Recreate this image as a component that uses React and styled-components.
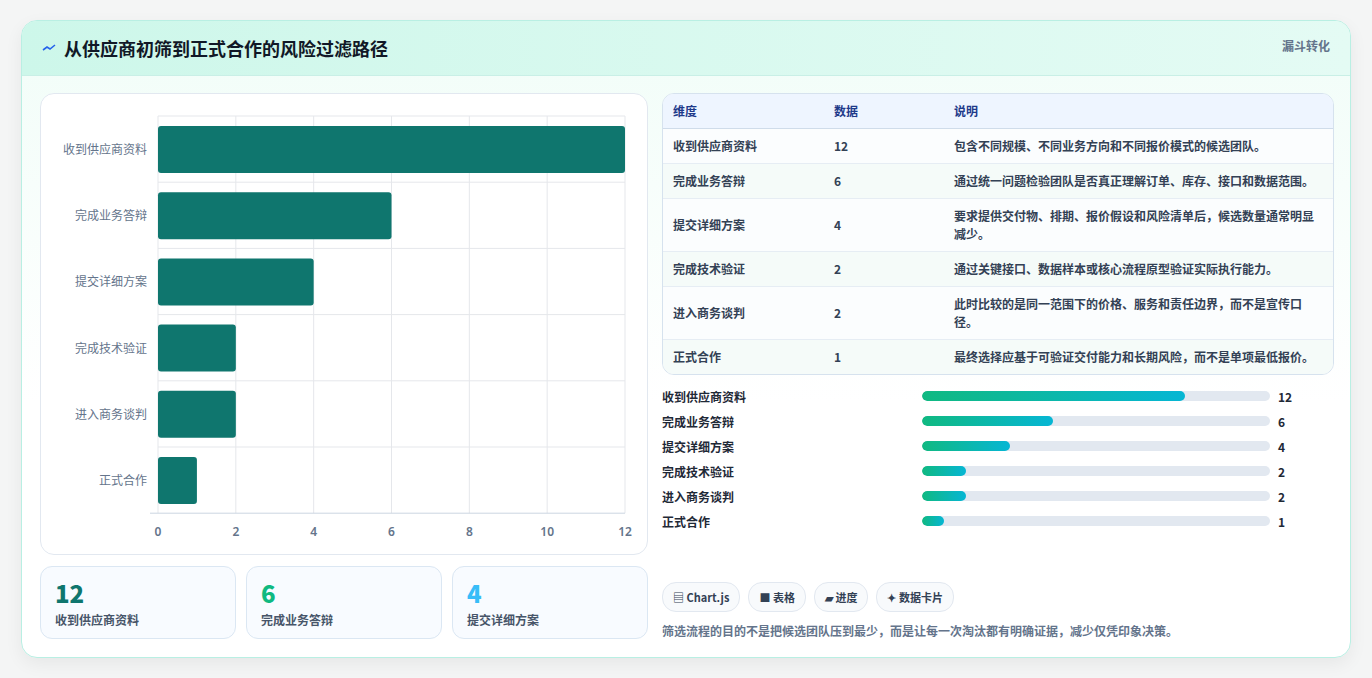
import React from 'react';
import styled, { createGlobalStyle } from 'styled-components';

const Global = createGlobalStyle`
  html, body { margin: 0; padding: 0; background: #f4f5f5; }
  body { font-family: "Noto Sans CJK SC", "Noto Sans", sans-serif; color: #1f2937; }
`;

const stages = [
  { name: '收到供应商资料', value: 12, note: '包含不同规模、不同业务方向和不同报价模式的候选团队。' },
  { name: '完成业务答辩', value: 6, note: '通过统一问题检验团队是否真正理解订单、库存、接口和数据范围。' },
  { name: '提交详细方案', value: 4, note: '要求提供交付物、排期、报价假设和风险清单后，候选数量通常明显减少。' },
  { name: '完成技术验证', value: 2, note: '通过关键接口、数据样本或核心流程原型验证实际执行能力。' },
  { name: '进入商务谈判', value: 2, note: '此时比较的是同一范围下的价格、服务和责任边界，而不是宣传口径。' },
  { name: '正式合作', value: 1, note: '最终选择应基于可验证交付能力和长期风险，而不是单项最低报价。' },
];

const Page = styled.div`
  padding: 20px 21px 21px;
`;

const Card = styled.div`
  background: linear-gradient(180deg, #f1fdf8 0%, #ffffff 60%);
  border: 1px solid #b9efe3;
  border-radius: 16px;
  box-shadow: 0 6px 18px rgba(0, 0, 0, 0.06);
  overflow: hidden;
`;

const Header = styled.div`
  height: 54px;
  display: flex;
  align-items: center;
  justify-content: space-between;
  padding: 0 20px 0 20px;
  background: linear-gradient(90deg, #cdf7ea 0%, #e4fbf4 100%);
  border-bottom: 1px solid #c9efe6;
`;

const Title = styled.h1`
  margin: 0;
  display: flex;
  align-items: center;
  gap: 8px;
  font-size: 18px;
  font-weight: 700;
  color: #111827;
`;

const Tag = styled.span`
  align-self: flex-start;
  margin-top: 16px;
  font-size: 12px;
  font-weight: 700;
  color: #64748b;
`;

const Body = styled.div`
  display: grid;
  grid-template-columns: 608px 672px;
  gap: 14px;
  padding: 17px 18px 18px;
`;

const Column = styled.div`
  display: flex;
  flex-direction: column;
  gap: ${p => p.$gap}px;
`;

const ChartBox = styled.div`
  height: 462px;
  background: #fff;
  border: 1px solid #e2e8f0;
  border-radius: 14px;
  box-sizing: border-box;
`;

const Stats = styled.div`
  display: grid;
  grid-template-columns: repeat(3, 1fr);
  gap: 10px;
`;

const Stat = styled.div`
  height: 73px;
  box-sizing: border-box;
  padding: 12px 14px;
  border: 1px solid #dbe7f3;
  border-radius: 12px;
  background: #f8fbff;
`;

const StatNum = styled.div`
  font-size: 24px;
  font-weight: 800;
  line-height: 28px;
  color: ${p => p.$color};
`;

const StatLabel = styled.div`
  margin-top: 4px;
  font-size: 12px;
  font-weight: 600;
  color: #475569;
`;

const TableWrap = styled.div`
  border: 1px solid #d6e2ee;
  border-radius: 12px;
  overflow: hidden;
  background: #fff;
`;

const Table = styled.table`
  width: 100%;
  border-collapse: collapse;
  font-size: 12px;
  th, td {
    text-align: left;
    padding: 8px 10px;
    line-height: 18px;
    vertical-align: middle;
  }
  th {
    background: #eef5ff;
    color: #1e3a8a;
    font-weight: 600;
    height: 16px;
    border-bottom: 1px solid #cfdcea;
  }
  td {
    font-weight: 600;
    color: #334155;
    height: 18px;
    border-top: 1px solid #e6edf4;
  }
  tbody tr:nth-child(odd) td { background: #fbfdfe; }
  tbody tr:nth-child(even) td { background: #f5fbf9; }
`;

const Bars = styled.div`
  display: flex;
  flex-direction: column;
  gap: 7px;
  margin-top: 2px;
`;

const BarRow = styled.div`
  display: grid;
  grid-template-columns: 252px 348px 1fr;
  align-items: center;
  column-gap: 8px;
  height: 18px;
  font-size: 12px;
  font-weight: 600;
  color: #1f2937;
`;

const Track = styled.div`
  height: 10px;
  border-radius: 5px;
  background: #e2e8f0;
  overflow: hidden;
`;

const Fill = styled.div`
  height: 100%;
  border-radius: 5px;
  background: linear-gradient(90deg, #10b981, #06b6d4);
`;

const Spacer = styled.div`
  flex: 1;
`;

const Chips = styled.div`
  display: flex;
  gap: 8px;
`;

const Chip = styled.span`
  height: 28px;
  padding: 0 10px;
  display: inline-flex;
  align-items: center;
  gap: 4px;
  border: 1px solid #e2e8f0;
  border-radius: 14px;
  background: #f8fafc;
  font-size: 11px;
  font-weight: 700;
  color: #334155;
`;

const Note = styled.p`
  margin: 10px 0 0;
  font-size: 12px;
  font-weight: 600;
  color: #64748b;
`;

function FunnelChart() {
  const x0 = 117, w = 467, top = 22, rowH = 66.2;
  const sx = v => x0 + (v / 12) * w;
  return (
    <svg width="606" height="460" style={{ display: 'block' }}>
      {[0, 2, 4, 6, 8, 10, 12].map(t => (
        <g key={t}>
          <line x1={sx(t)} x2={sx(t)} y1={top} y2={top + rowH * 6} stroke="#e5e7eb" />
          <text x={sx(t)} y={442} textAnchor="middle" fontSize="12" fontWeight="600" fill="#64748b" fontFamily="Noto Sans, sans-serif">{t}</text>
        </g>
      ))}
      {stages.map((s, i) => (
        <g key={s.name}>
          <line x1={x0} x2={x0 + w} y1={top + rowH * i} y2={top + rowH * i} stroke="#e5e7eb" />
          <rect x={x0} y={top + rowH * i + 10} width={sx(s.value) - x0} height={47} rx="3" fill="#0f766e" />
          <text x={106} y={top + rowH * i + 38} textAnchor="end" fontSize="12" fill="#64748b" fontFamily="Noto Sans CJK SC, sans-serif">{s.name}</text>
        </g>
      ))}
      <line x1={x0 - 8} x2={x0 + w} y1={top + rowH * 6} y2={top + rowH * 6} stroke="#cbd5e1" />
    </svg>
  );
}

export default function App() {
  return (
    <Page>
      <Global />
      <Card>
        <Header>
          <Title>
            <svg width="14" height="10" viewBox="0 0 14 10"><path d="M1 7 L5 4 L8 6 L13 2" stroke="#2563eb" strokeWidth="1.6" fill="none" /></svg>
            从供应商初筛到正式合作的风险过滤路径
          </Title>
          <Tag>漏斗转化</Tag>
        </Header>
        <Body>
          <Column $gap={11}>
            <ChartBox><FunnelChart /></ChartBox>
            <Stats>
              <Stat><StatNum $color="#0f766e">12</StatNum><StatLabel>收到供应商资料</StatLabel></Stat>
              <Stat><StatNum $color="#10b981">6</StatNum><StatLabel>完成业务答辩</StatLabel></Stat>
              <Stat><StatNum $color="#38bdf8">4</StatNum><StatLabel>提交详细方案</StatLabel></Stat>
            </Stats>
          </Column>
          <Column $gap={10}>
            <TableWrap>
              <Table>
                <colgroup><col style={{ width: 161 }} /><col style={{ width: 120 }} /><col /></colgroup>
                <thead><tr><th>维度</th><th>数据</th><th>说明</th></tr></thead>
                <tbody>
                  {stages.map(s => (
                    <tr key={s.name}><td>{s.name}</td><td>{s.value}</td><td>{s.note}</td></tr>
                  ))}
                </tbody>
              </Table>
            </TableWrap>
            <Bars>
              {stages.map(s => (
                <BarRow key={s.name}>
                  <span>{s.name}</span>
                  <Track><Fill style={{ width: `${(s.value / 12) * 75.5}%` }} /></Track>
                  <span>{s.value}</span>
                </BarRow>
              ))}
            </Bars>
            <Spacer />
            <div>
              <Chips>
                <Chip>▤ Chart.js</Chip>
                <Chip>■ 表格</Chip>
                <Chip>▰ 进度</Chip>
                <Chip>✦ 数据卡片</Chip>
              </Chips>
              <Note>筛选流程的目的不是把候选团队压到最少，而是让每一次淘汰都有明确证据，减少仅凭印象决策。</Note>
            </div>
          </Column>
        </Body>
      </Card>
    </Page>
  );
}
